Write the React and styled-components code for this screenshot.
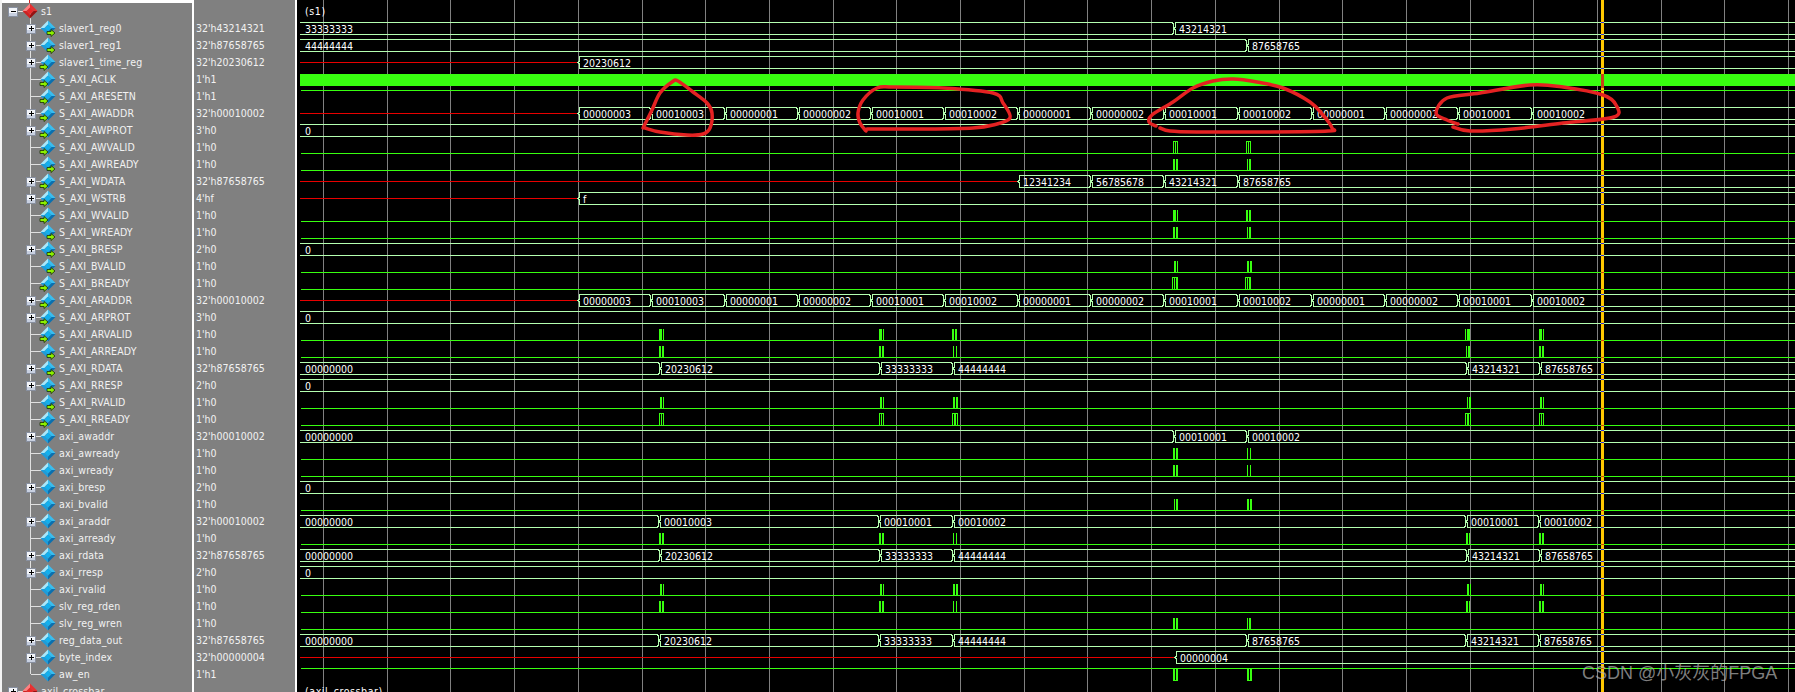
import React from "react";
import styled, { createGlobalStyle } from "styled-components";

const Global = createGlobalStyle`
  html, body { margin: 0; padding: 0; background: #000; }
  #root { width: 1795px; height: 692px; overflow: hidden; }
`;
const FONT = `"DejaVu Sans Condensed", "DejaVu Sans", "Noto Sans", sans-serif`;
const Page = styled.div`
  position: relative; display: flex; width: 1795px; height: 692px; overflow: hidden;
  background: #000; font-family: ${FONT}; font-size: 10.5px;
`;
const NamePanel = styled.div`
  width: 190px; flex: none; height: 692px; background: #808080; overflow: hidden;
  border-left: 2px solid #f4f4f4; border-right: 2px solid #fff; letter-spacing: 0.15px;
`;
const TopStrip = styled.div`
  position: relative; height: 3px; background: #fff;
  &::after { content: ""; position: absolute; left: 27px; top: 0; width: 1px; height: 3px; background: #d02020; }
`;
const ValuePanel = styled.div`
  width: 103px; flex: none; height: 692px; padding-top: 3px; box-sizing: border-box;
  background: #808080; overflow: hidden; border-right: 2px solid #fff;
`;
const WavePanel = styled.div`flex: 1; height: 692px; overflow: hidden;`;
const Row = styled.div`
  display: flex; align-items: center; height: 17px; color: #f2f2f2; white-space: nowrap; line-height: 17px;
`;
const ValueRow = styled(Row)`padding-left: 2px;`;
const Gutter = styled.svg`display: block; flex: none; width: ${p => p.$w}px; height: 17px;`;
const WaveSvg = styled.svg`display: block; width: 1498px; height: 692px;`;
const Value = styled.text`
  font-family: ${FONT}; font-size: 10.5px; fill: #fff;
`;
const GroupLabel = styled(Value)`letter-spacing: 0.6px;`;
const Watermark = styled.div`
  position: absolute; left: 1582px; top: 661px; white-space: nowrap;
  font-family: "Liberation Sans", "Noto Sans CJK SC", sans-serif; font-size: 18px; line-height: 24px;
  color: rgba(176,176,176,0.72);
`;

const A = ["00000003","00010003","00000001","00000002","00010001","00010002","00000001","00000002","00010001","00010002","00000001","00000002","00010001","00010002"];
const AX = [578,651,725,798,871,944,1018,1091,1164,1238,1312,1385,1458,1532];
const addr = AX.map((x, i) => [x, A[i]]);
const rdataSegs = [[300,"00000000"],[660,"20230612"],[880,"33333333"],[953,"44444444"],[1467,"43214321"],[1540,"87658765"]];

const b = (...a) => a;
const rows = [
  { name: "s1", top: true, open: true, red: true },
  { name: "slaver1_reg0", value: "32'h43214321", icon: "out", box: 1, bus: [[300,"33333333"],[1174,"43214321"]] },
  { name: "slaver1_reg1", value: "32'h87658765", icon: "out", box: 1, bus: [[300,"44444444"],[1247,"87658765"]] },
  { name: "slaver1_time_reg", value: "32'h20230612", icon: "in", box: 1, bus: [[578,"20230612"]], x: 1 },
  { name: "S_AXI_ACLK", value: "1'h1", icon: "in", clock: 1 },
  { name: "S_AXI_ARESETN", value: "1'h1", icon: "in", high: 1 },
  { name: "S_AXI_AWADDR", value: "32'h00010002", icon: "in", box: 1, bus: addr, x: 1 },
  { name: "S_AXI_AWPROT", value: "3'h0", icon: "in", box: 1, bus: [[300,"0"]] },
  { name: "S_AXI_AWVALID", value: "1'h0", icon: "in", outline: [[1173,1175,1177],[1246,1248,1250]] },
  { name: "S_AXI_AWREADY", value: "1'h0", icon: "out", bars: b([1173,2],[1176,2],[1247,1],[1249,2]) },
  { name: "S_AXI_WDATA", value: "32'h87658765", icon: "in", box: 1, x: 1, bus: [[1018,"12341234"],[1091,"56785678"],[1164,"43214321"],[1238,"87658765"]] },
  { name: "S_AXI_WSTRB", value: "4'hf", icon: "in", box: 1, x: 1, bus: [[578,"f"]] },
  { name: "S_AXI_WVALID", value: "1'h0", icon: "in", bars: b([1173,3],[1177,1],[1246,2],[1249,2]) },
  { name: "S_AXI_WREADY", value: "1'h0", icon: "out", bars: b([1173,2],[1176,2],[1247,1],[1249,2]) },
  { name: "S_AXI_BRESP", value: "2'h0", icon: "out", box: 1, bus: [[300,"0"]] },
  { name: "S_AXI_BVALID", value: "1'h0", icon: "out", bars: b([1174,2],[1177,1],[1247,2],[1250,2]) },
  { name: "S_AXI_BREADY", value: "1'h0", icon: "in", outline: [[1172,1174,1176,1177],[1245,1247,1249,1250]] },
  { name: "S_AXI_ARADDR", value: "32'h00010002", icon: "in", box: 1, bus: addr, x: 1 },
  { name: "S_AXI_ARPROT", value: "3'h0", icon: "in", box: 1, bus: [[300,"0"]] },
  { name: "S_AXI_ARVALID", value: "1'h0", icon: "in", bars: b([659,3],[663,1],[879,3],[883,1],[952,2],[955,2],[1465,1],[1467,3],[1539,3],[1543,1]) },
  { name: "S_AXI_ARREADY", value: "1'h0", icon: "out", bars: b([659,2],[662,2],[879,2],[882,2],[953,1],[956,1],[1466,1],[1468,2],[1539,2],[1542,2]) },
  { name: "S_AXI_RDATA", value: "32'h87658765", icon: "out", box: 1, bus: rdataSegs },
  { name: "S_AXI_RRESP", value: "2'h0", icon: "out", box: 1, bus: [[300,"0"]] },
  { name: "S_AXI_RVALID", value: "1'h0", icon: "out", bars: b([660,2],[663,1],[880,2],[883,1],[953,2],[956,2],[1467,1],[1469,2],[1540,2],[1543,1]) },
  { name: "S_AXI_RREADY", value: "1'h0", icon: "in", outline: [[659,661,663],[879,881,883],[952,954,955,957],[1465,1467,1468,1470],[1539,1541,1543]] },
  { name: "axi_awaddr", value: "32'h00010002", box: 1, bus: [[300,"00000000"],[1174,"00010001"],[1247,"00010002"]] },
  { name: "axi_awready", value: "1'h0", bars: b([1173,2],[1176,2],[1247,1],[1250,1]) },
  { name: "axi_wready", value: "1'h0", bars: b([1173,2],[1176,2],[1247,1],[1250,1]) },
  { name: "axi_bresp", value: "2'h0", box: 1, bus: [[300,"0"]] },
  { name: "axi_bvalid", value: "1'h0", bars: b([1174,1],[1176,2],[1247,2],[1250,2]) },
  { name: "axi_araddr", value: "32'h00010002", box: 1, bus: [[300,"00000000"],[659,"00010003"],[879,"00010001"],[953,"00010002"],[1466,"00010001"],[1539,"00010002"]] },
  { name: "axi_arready", value: "1'h0", bars: b([659,2],[662,2],[879,2],[882,2],[953,1],[956,1],[1466,2],[1469,1],[1539,2],[1542,2]) },
  { name: "axi_rdata", value: "32'h87658765", box: 1, bus: rdataSegs },
  { name: "axi_rresp", value: "2'h0", box: 1, bus: [[300,"0"]] },
  { name: "axi_rvalid", value: "1'h0", bars: b([660,2],[663,1],[880,2],[883,1],[953,2],[956,2],[1467,2],[1470,1],[1540,2],[1543,1]) },
  { name: "slv_reg_rden", value: "1'h0", bars: b([659,2],[662,2],[879,2],[882,2],[953,1],[956,1],[1466,2],[1469,1],[1539,2],[1542,2]) },
  { name: "slv_reg_wren", value: "1'h0", bars: b([1173,2],[1176,2],[1247,1],[1249,2]) },
  { name: "reg_data_out", value: "32'h87658765", box: 1, bus: [[300,"00000000"],[659,"20230612"],[879,"33333333"],[953,"44444444"],[1247,"87658765"],[1466,"43214321"],[1539,"87658765"]] },
  { name: "byte_index", value: "32'h00000004", box: 1, x: 1, bus: [[1175,"00000004"]] },
  { name: "aw_en", value: "1'h1", last: 1, notch: [1173,1247] },
  { name: "axil_crossbar", top: true, red: true },
];

const BUS = "#b4ffb0";
const LOW = "#38ff10";
const RED = "#e80000";
const grid = Array.from({ length: 24 }, (_, k) => Math.round(323 + 63.7 * k));
const centre = i => 11 + 17 * i;

function busPath(segs, c) {
  const t = c - 6 + 0.5, m = c + 0.5, u = c + 6 + 0.5;
  let d = "";
  segs.forEach(([x], i) => {
    const end = i + 1 < segs.length ? segs[i + 1][0] - 2 : 1795;
    const s = x === 300 ? 300 : x + 2;
    d += `M${s} ${t}H${end}M${s} ${u}H${end}`;
    if (x !== 300) d += `M${x + 2} ${t}L${x + 1} ${t + 1}V${m - 1}L${x} ${m}L${x + 1} ${m + 1}V${u - 1}L${x + 2} ${u}`;
    if (i + 1 < segs.length) {
      const n = segs[i + 1][0];
      d += `M${n - 2} ${t}L${n - 1} ${t + 1}V${m - 1}L${n} ${m}L${n - 1} ${m + 1}V${u - 1}L${n - 2} ${u}`;
    }
  });
  return d;
}

function smooth(p) {
  let d = `M${p[0][0]} ${p[0][1]}`;
  for (let i = 0; i < p.length - 1; i++) {
    const a = p[Math.max(i - 1, 0)], q = p[i], r = p[i + 1], s = p[Math.min(i + 2, p.length - 1)];
    d += `C${q[0] + (r[0] - a[0]) / 6} ${q[1] + (r[1] - a[1]) / 6} ${r[0] - (s[0] - q[0]) / 6} ${r[1] - (s[1] - q[1]) / 6} ${r[0]} ${r[1]}`;
  }
  return d;
}
const scribbles = [
  [[643,128],[652,110],[660,93],[672,82],[678,81],[693,92],[707,103],[712,113],[710,128],[703,134],[687,135],[660,132],[645,128]],
  [[866,131],[860,123],[858,113],[863,100],[877,88],[893,87],[943,88],[993,93],[1003,103],[1010,118],[993,125],[973,128],[927,129],[867,129]],
  [[1156,126],[1149,122],[1152,115],[1173,102],[1193,88],[1213,81],[1233,79],[1257,82],[1283,88],[1310,102],[1323,115],[1332,128],[1328,131],[1263,132],[1197,132],[1170,131],[1160,128]],
  [[1458,124],[1447,120],[1436,113],[1447,98],[1480,93],[1530,85],[1563,87],[1603,95],[1616,105],[1614,117],[1563,123],[1513,129],[1470,131],[1453,127]],
];

function Diamond({ cx, cy, red }) {
  const r = 7.5;
  const c = red
    ? { tl: "#ff8080", tr: "#e83030", bl: "#d02020", br: "#981010", mid: "#e82828" }
    : { tl: "#a8e8fc", tr: "#38bdf0", bl: "#1c9ddc", br: "#0a70b0", mid: "#12b0ee" };
  const i = 3.5;
  return (
    <g>
      <polygon points={`${cx},${cy - r} ${cx - r},${cy} ${cx - i},${cy} ${cx},${cy - i}`} fill={c.tl} />
      <polygon points={`${cx},${cy - r} ${cx + r},${cy} ${cx + i},${cy} ${cx},${cy - i}`} fill={c.tr} />
      <polygon points={`${cx - r},${cy} ${cx},${cy + r} ${cx},${cy + i} ${cx - i},${cy}`} fill={c.bl} />
      <polygon points={`${cx + r},${cy} ${cx},${cy + r} ${cx},${cy + i} ${cx + i},${cy}`} fill={c.br} />
      <polygon points={`${cx},${cy - i} ${cx + i},${cy} ${cx},${cy + i} ${cx - i},${cy}`} fill={c.mid} />
    </g>
  );
}
function Arrow({ x, y }) {
  return (
    <polygon
      points={`${x},${y - 1.5} ${x + 4},${y - 1.5} ${x + 4},${y - 3.5} ${x + 8},${y} ${x + 4},${y + 3.5} ${x + 4},${y + 1.5} ${x},${y + 1.5}`}
      fill="#8cf000" stroke="#1a3000" strokeWidth="0.8"
    />
  );
}
function Expander({ x, y, open }) {
  return (
    <g shapeRendering="crispEdges">
      <rect x={x + 0.5} y={y + 0.5} width="9" height="9" fill="#f2f4f8" stroke="#8890a0" />
      <rect x={x + 1} y={y + 6} width="8" height="3" fill="#c8d0e0" />
      <rect x={x + 2.5} y={y + 4} width="5" height="1" fill="#000" />
      {!open && <rect x={x + 4.5} y={y + 2} width="1" height="5" fill="#000" />}
    </g>
  );
}
function TreeCell({ r }) {
  const w = r.top ? 41 : 59;
  const c = 8;
  return (
    <Gutter $w={w - 2} viewBox={`2 0 ${w - 2} 17`}>
      {r.top ? (
        <>
          <path d={`M17 ${c + 0.5}H24${r.open ? `M30.5 ${c}V17` : ""}`} stroke="#e0e0e0" fill="none" shapeRendering="crispEdges" />
          <Expander x={8} y={c - 4} open={r.open} />
          <Diamond cx={30} cy={c} red />
        </>
      ) : (
        <>
          <path d={`M30.5 0V${r.last ? c : 17}M30.5 ${c + 0.5}H42`} stroke="#e0e0e0" fill="none" shapeRendering="crispEdges" />
          {r.box ? <Expander x={26} y={c - 4} /> : null}
          <Diamond cx={48} cy={c} />
          {r.icon === "out" && <Arrow x={47} y={c + 5} />}
          {r.icon === "in" && <Arrow x={40} y={c + 5} />}
        </>
      )}
    </Gutter>
  );
}

function WaveRow({ r, i }) {
  const c = centre(i);
  const low = c + 6, high = c - 6;
  if (r.top) {
    return <GroupLabel x={305} y={c + 4}>{`(${r.name})`}</GroupLabel>;
  }
  if (r.clock) return <rect x={300} y={c - 5} width={1495} height={12} fill="#38ff10" />;
  if (r.high) return <rect x={301} y={high} width={1494} height={1} fill={LOW} />;
  if (r.bus) {
    const first = r.bus[0][0];
    return (
      <g>
        {r.x ? <rect x={300} y={c} width={first - 301} height={1} fill={RED} /> : null}
        <path d={busPath(r.bus, c)} stroke={BUS} fill="none" strokeWidth="1" shapeRendering="crispEdges" />
        {r.bus.map(([x, t], k) => <Value key={k} x={x + 5} y={c + 5}>{t}</Value>)}
      </g>
    );
  }
  if (r.notch) {
    return (
      <g>
        <rect x={301} y={high} width={1494} height={1} fill={LOW} />
        {r.notch.map(x => (
          <g key={x} fill={LOW}>
            <rect x={x} y={high} width={2} height={13} />
            <rect x={x + 3} y={high} width={2} height={13} />
            <rect x={x} y={low} width={5} height={1} />
          </g>
        ))}
      </g>
    );
  }
  return (
    <g>
      <rect x={301} y={low} width={1494} height={1} fill={LOW} />
      {(r.bars || []).map(([x, w], k) => <rect key={k} x={x} y={high + 1} width={w} height={12} fill={LOW} />)}
      {(r.outline || []).map((set, k) => (
        <g key={k} fill={LOW}>
          {set.map(x => <rect key={x} x={x} y={high + 1} width={1} height={12} />)}
          <rect x={set[0]} y={high} width={set[set.length - 1] - set[0] + 1} height={1} />
        </g>
      ))}
    </g>
  );
}

function Cursor() {
  const ticks = [];
  rows.forEach((r, i) => {
    const c = centre(i);
    if (r.bus) { ticks.push([c - 6, "#3030e0"], [c + 6, "#3030e0"]); }
    else if (r.high || r.notch) ticks.push([c - 6, "#d04010"]);
    else if (!r.top && !r.clock) ticks.push([c + 6, "#d04010"]);
  });
  return (
    <g>
      <rect x={1601} y={0} width={3} height={692} fill="#ffc800" />
      <rect x={1601} y={74} width={3} height={14} fill="#c84018" />
      {ticks.map(([y, f], k) => <rect key={k} x={1601} y={y} width={3} height={1} fill={f} />)}
    </g>
  );
}

export default function App() {
  return (
    <Page>
      <Global />
      <NamePanel>
        <TopStrip />
        {rows.map(r => (
          <Row key={r.name}>
            <TreeCell r={r} />
            {r.name}
          </Row>
        ))}
      </NamePanel>
      <ValuePanel>
        {rows.map(r => <ValueRow key={r.name}>{r.value}</ValueRow>)}
      </ValuePanel>
      <WavePanel>
        <WaveSvg viewBox="297 0 1498 692">
          {grid.map(x => <rect key={x} x={x} y={0} width={1} height={692} fill="#808080" />)}
          {rows.map((r, i) => <WaveRow key={r.name} r={r} i={i} />)}
          <Cursor />
          {scribbles.map((p, k) => (
            <path key={k} d={smooth(p)} fill="none" stroke="#e42222" strokeWidth="3.5" strokeLinecap="round" strokeLinejoin="round" />
          ))}
        </WaveSvg>
      </WavePanel>
      <Watermark>CSDN @小灰灰的FPGA</Watermark>
    </Page>
  );
}
